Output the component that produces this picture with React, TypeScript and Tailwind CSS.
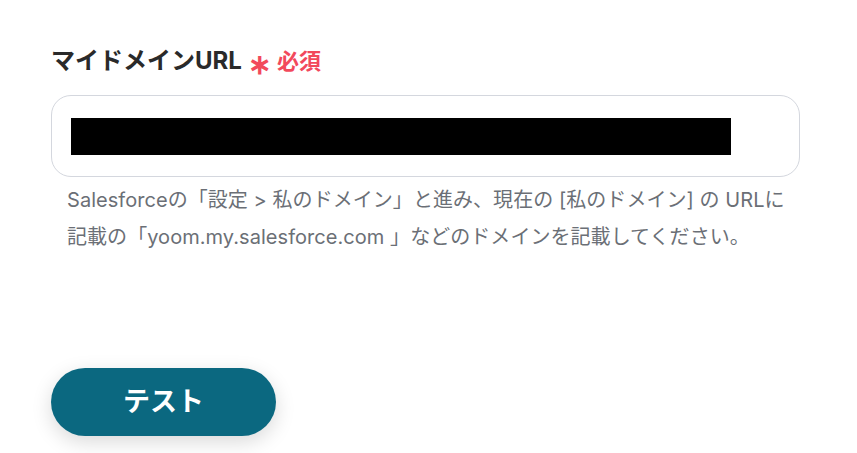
export default function App() {
  return (
    <div
      className="w-[857px] h-[453px] bg-white overflow-hidden"
      style={{ fontFamily: 'Inter, "Noto Sans CJK JP", sans-serif' }}
    >
      <div className="pt-[44px] pl-[51px] pr-[57px]">
        <div className="flex items-center h-[34px]">
          <span className="text-[24px] font-bold text-[#2a2a2a]">マイドメインURL</span>
          <span className="ml-[6px] text-[28px] font-bold text-[#f2495c] leading-none mt-[6px]">
            ∗
          </span>
          <span className="ml-[6px] text-[22px] font-bold text-[#f2495c]">必須</span>
        </div>

        <div className="mt-[17px] h-[82px] rounded-[20px] border border-[#d4d7de] flex items-center px-[19px]">
          <div className="w-[660px] h-[37px] bg-black" />
        </div>

        <p className="mt-[5px] pl-[16px] text-[20px] leading-[37px] text-[#6b6f76] tracking-[0.05px]">
          Salesforceの「設定 &gt; 私のドメイン」と進み、現在の [私のドメイン] の URLに
          <br />
          記載の「yoom.my.salesforce.com 」などのドメインを記載してください。
        </p>

        <button
          type="button"
          className="mt-[112px] w-[225px] h-[68px] rounded-full bg-[#0b6880] text-white text-[27px] font-bold shadow-[0_6px_20px_rgba(0,0,0,0.15)]"
        >
          テスト
        </button>
      </div>
    </div>
  );
}
